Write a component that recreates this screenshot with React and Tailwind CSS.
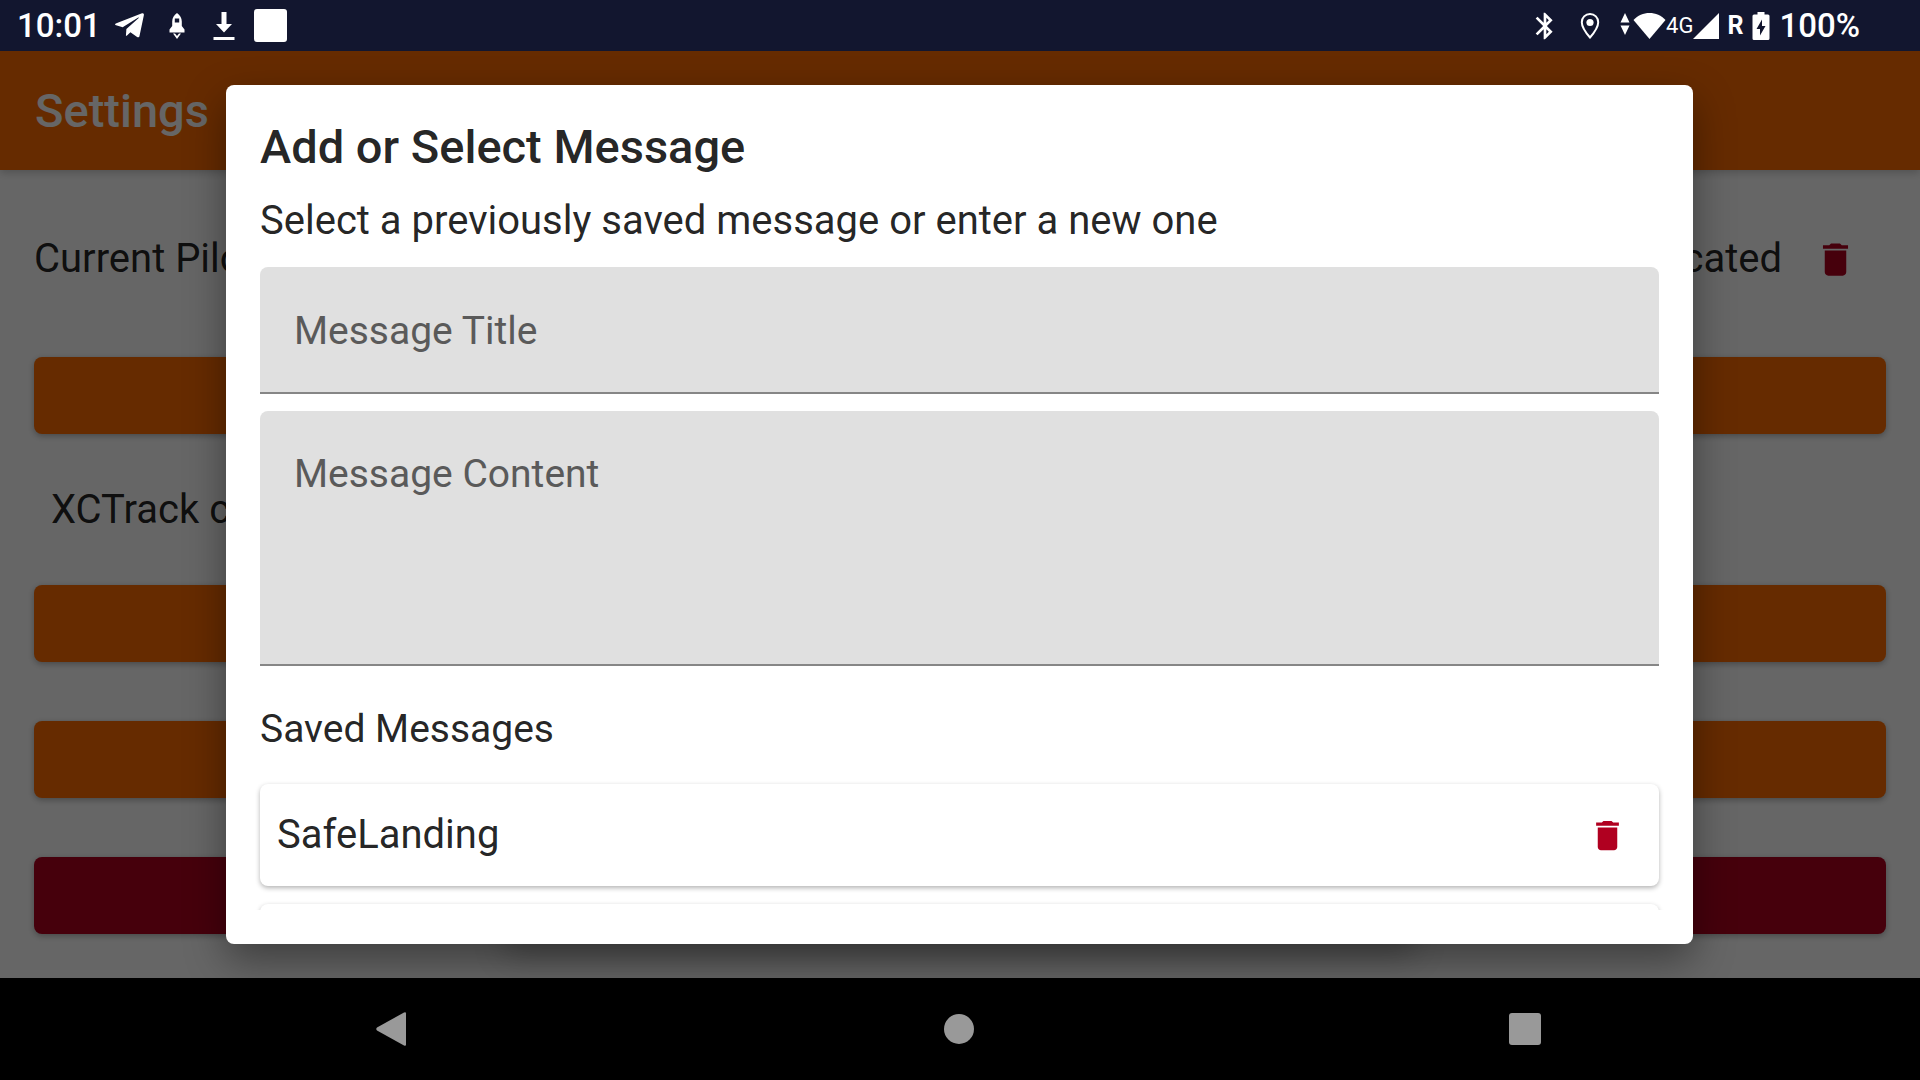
import { useState } from 'react';
import { FaTelegramPlane } from 'react-icons/fa';
import { MdBluetooth, MdDelete } from 'react-icons/md';

const savedMessages = [
    { id: 1, title: 'SafeLanding' },
    { id: 2, title: '' },
];

function RocketIcon() {
    return (
        <svg className="h-7 w-4" viewBox="0 0 16 28" fill="currentColor">
            <path
                fillRule="evenodd"
                d="M8 1C5 3 3.200 6 3.200 9.500V14L0.500 17.500V20.500H15.500V17.500L12.800 14V9.500C12.800 6 11 3 8 1ZM5.800 6.500H10.200V10.500H5.800Z"
            />
            <path d="M4 21.500L8 27L12 21.500H10L8 24L6 21.500Z" />
        </svg>
    );
}

function DownloadIcon() {
    return (
        <svg className="h-7 w-[22px]" viewBox="0 0 22 28" fill="currentColor">
            <path d="M8.500 0H13.500V12H19L11 20.500L3 12H8.500ZM0.500 25H21.500V28H0.500Z" />
        </svg>
    );
}

function LocationIcon() {
    return (
        <svg className="h-7 w-5" viewBox="0 0 20 28" fill="none">
            <path
                d="M10 2C5.300 2 1.800 5.600 1.800 10.200C1.800 16 10 25.500 10 25.500S18.200 16 18.200 10.200C18.200 5.600 14.700 2 10 2Z"
                stroke="currentColor"
                strokeWidth="2"
            />
            <circle cx="10" cy="10.500" r="3.600" fill="currentColor" />
        </svg>
    );
}

function WifiIcon() {
    return (
        <svg className="h-7 w-[46px]" viewBox="0 0 46 28" fill="currentColor">
            <path d="M5 1L9.500 10.500H0.500ZM0.500 13.500H9.500L5 23Z" />
            <path d="M13.500 8C17.500 3.500 23.500 1 29.500 1S41.500 3.500 45.500 8L29.500 27Z" />
        </svg>
    );
}

function SignalIcon() {
    return (
        <svg className="h-7 w-[26px]" viewBox="0 0 26 28" fill="currentColor">
            <path d="M26 1V27H0Z" />
        </svg>
    );
}

function BatteryIcon() {
    return (
        <svg className="h-7 w-[18px]" viewBox="0 0 18 28" fill="currentColor">
            <path
                fillRule="evenodd"
                d="M5.500 0H12.500V2.500H16Q17.500 2.500 17.500 4V26.500Q17.500 28 16 28H2Q0.500 28 0.500 26.500V4Q0.500 2.500 2 2.500H5.500ZM10 7.500L4.500 17H8V23.500L13.500 14H10Z"
            />
        </svg>
    );
}

function StatusBar() {
    return (
        <div className="flex h-[51px] shrink-0 items-center justify-between bg-[#12162f] pr-[60px] pl-[17px] text-white">
            <div className="flex items-center">
                <span className="w-[89px] text-[33px] font-medium">10:01</span>
                <span className="flex w-[47px] justify-center">
                    <FaTelegramPlane className="size-[33px]" />
                </span>
                <span className="flex w-[47px] justify-center">
                    <RocketIcon />
                </span>
                <span className="flex w-[47px] justify-center">
                    <DownloadIcon />
                </span>
                <span className="flex w-[47px] justify-center">
                    <span className="size-[33px] rounded-[3px] bg-white" />
                </span>
            </div>
            <div className="flex items-center">
                <span className="flex w-[45px] justify-center">
                    <MdBluetooth className="size-8" />
                </span>
                <span className="flex w-[45px] justify-center">
                    <LocationIcon />
                </span>
                <span className="ml-2 flex items-center">
                    <WifiIcon />
                    <span className="text-[22px]">4G</span>
                    <SignalIcon />
                </span>
                <span className="ml-2 text-[25px] font-bold">R</span>
                <span className="mx-[9px]">
                    <BatteryIcon />
                </span>
                <span className="text-[33px] font-medium">100%</span>
            </div>
        </div>
    );
}

function SettingsButton({ label, danger = false }) {
    return (
        <button
            type="button"
            aria-label={label}
            className={`h-[77px] w-full shrink-0 rounded-lg shadow-[0_2px_6px_rgba(0,0,0,0.3)] ${
                danger ? 'bg-[#b00020]' : 'bg-[#ff6d00]'
            }`}
        />
    );
}

function SettingsScreen() {
    return (
        <div className="flex h-full flex-col bg-white">
            <header className="z-10 flex h-[119px] shrink-0 items-center bg-[#ff6d00] px-[35px] pt-0.5 shadow-[0_3px_8px_rgba(0,0,0,0.2)]">
                <h1 className="text-[47px] font-medium text-white">Settings</h1>
            </header>
            <main className="flex flex-col px-[34px] text-[40px] text-black/87">
                <div className="mb-[9px] flex h-[178px] items-center">
                    <span>Current Pilot</span>
                    <span className="ml-auto">Authenticated</span>
                    <button type="button" aria-label="Delete pilot" className="mr-[25px] ml-7 p-1 text-[#b00020]">
                        <MdDelete className="size-[43px]" />
                    </button>
                </div>
                <SettingsButton label="Change pilot" />
                <p className="flex h-[151px] shrink-0 items-center px-[17px]">XCTrack connection</p>
                <div className="flex flex-col gap-[59px]">
                    <SettingsButton label="Connect" />
                    <SettingsButton label="Messages" />
                    <SettingsButton label="Reset" danger />
                </div>
            </main>
        </div>
    );
}

function MessageDialog() {
    const [title, setTitle] = useState('');
    const [content, setContent] = useState('');

    return (
        <div
            role="dialog"
            aria-modal="true"
            aria-labelledby="dialog-title"
            className="flex h-full flex-col rounded-lg bg-white p-[34px] text-[39px] text-black/87 shadow-[0_16px_40px_rgba(0,0,0,0.4),0_290px_30px_-280px_rgba(0,0,0,0.25)]"
        >
            <h2 id="dialog-title" className="text-[47px] leading-[56px] font-medium">
                Add or Select Message
            </h2>
            <p className="mt-[22px] text-[40px] leading-[48px]">Select a previously saved message or enter a new one</p>
            <input
                type="text"
                aria-label="Message Title"
                placeholder="Message Title"
                value={title}
                onChange={(e) => setTitle(e.target.value)}
                className="mt-[22px] h-[127px] w-full shrink-0 rounded-t-lg border-b-2 border-[#868686] bg-[#e0e0e0] px-[34px] pt-0.5 placeholder:text-[#5a5a5a]"
            />
            <textarea
                aria-label="Message Content"
                placeholder="Message Content"
                value={content}
                onChange={(e) => setContent(e.target.value)}
                className="mt-[17px] block h-[255px] w-full shrink-0 resize-none rounded-t-lg border-b-2 border-[#868686] bg-[#e0e0e0] px-[34px] py-[39px] leading-[48px] placeholder:text-[#5a5a5a]"
            />
            <h3 className="mt-[39px] leading-[48px]">Saved Messages</h3>
            <ul className="-mx-2 mt-[27px] flex min-h-0 flex-col gap-[18px] overflow-y-auto px-2 pt-1 [scrollbar-width:none]">
                {savedMessages.map((message) => (
                    <li
                        key={message.id}
                        className="flex h-[102px] shrink-0 items-center justify-between rounded-lg pr-[28px] pl-[17px] shadow-[0_2px_5px_rgba(0,0,0,0.3)]"
                    >
                        <span className="text-[40px] leading-[48px]">{message.title}</span>
                        <button type="button" aria-label={`Delete ${message.title}`} className="p-1 text-[#b00020]">
                            <MdDelete className="size-[39px]" />
                        </button>
                    </li>
                ))}
            </ul>
        </div>
    );
}

function NavigationBar() {
    return (
        <nav className="flex h-[102px] shrink-0 items-center justify-between bg-black pr-[379px] pl-[375px] text-[#999999]">
            <button type="button" aria-label="Back">
                <svg className="size-[34px]" viewBox="0 0 34 34" fill="currentColor">
                    <path d="M29 0.500Q31 -0.500 31 1.500V32.500Q31 34.500 29 33.500L2 18.500Q0.500 17 2 15.500Z" />
                </svg>
            </button>
            <button type="button" aria-label="Home" className="size-[30px] rounded-full bg-[#999999]" />
            <button type="button" aria-label="Recent apps" className="size-8 rounded-[3px] bg-[#999999]" />
        </nav>
    );
}

export default function App() {
    return (
        <div className="flex h-screen flex-col overflow-hidden font-['Roboto',sans-serif]">
            <StatusBar />
            <div className="relative min-h-0 flex-1 overflow-hidden">
                <SettingsScreen />
                <div className="absolute inset-0 z-20 bg-black/60 py-[34px] pr-[227px] pl-[226px]">
                    <MessageDialog />
                </div>
            </div>
            <NavigationBar />
        </div>
    );
}
